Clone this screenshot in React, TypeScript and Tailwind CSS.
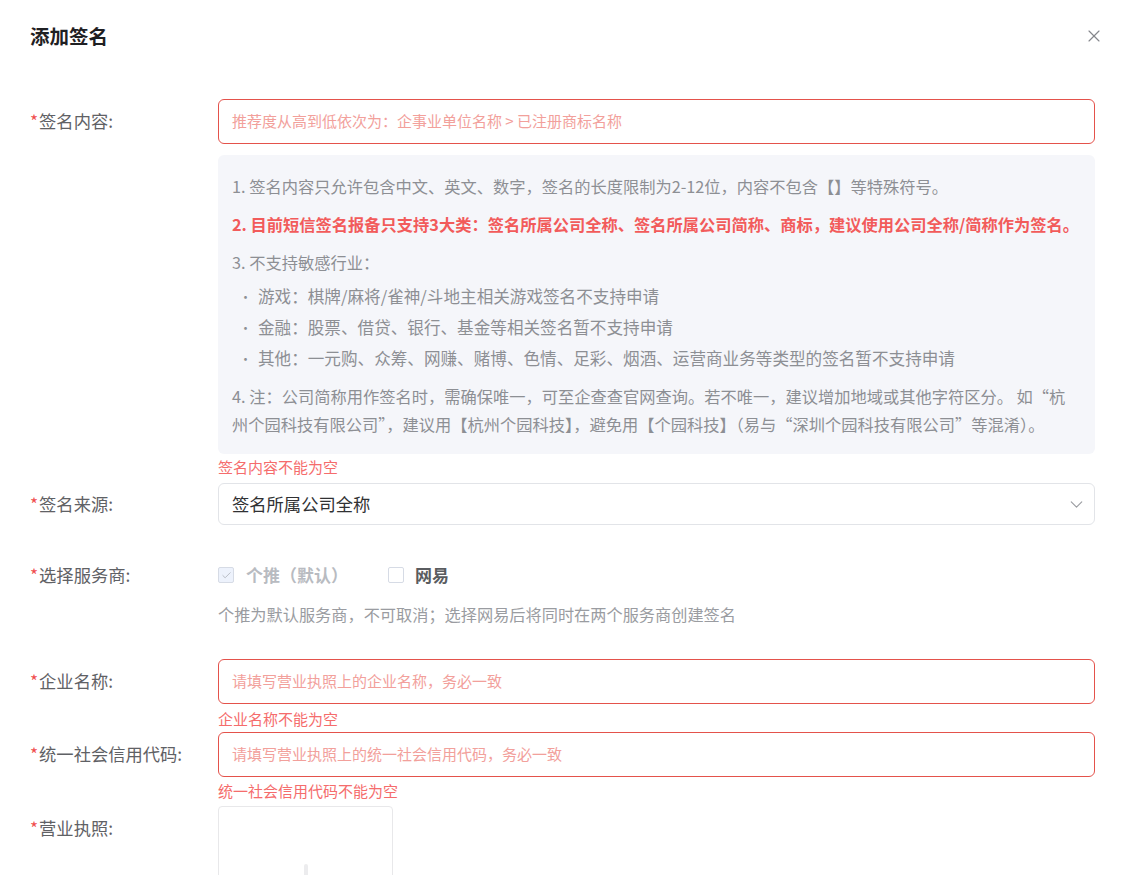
import { X, ChevronDown, Check } from "lucide-react"

const FONT = { fontFamily: '"Noto Sans CJK SC", "Noto Sans", sans-serif' }

function Label({ text }: { text: string }) {
  return (
    <div className="flex h-[44px] w-[188px] shrink-0 items-center text-[17.3px] text-[#5f6165]">
      <span className="mr-[1px] text-[#f04c4c]">*</span>
      {text}
    </div>
  )
}

function ErrorInput({ placeholder }: { placeholder: string }) {
  return (
    <div className="flex h-[45px] items-center rounded-[6px] border border-[#e4524b] px-[13px] text-[15px] text-[#f2a09b]">
      {placeholder}
    </div>
  )
}

const bullets = [
  "游戏：棋牌/麻将/雀神/斗地主相关游戏签名不支持申请",
  "金融：股票、借贷、银行、基金等相关签名暂不支持申请",
  "其他：一元购、众筹、网赚、赌博、色情、足彩、烟酒、运营商业务等类型的签名暂不支持申请",
]

export default function App() {
  return (
    <div className="h-[875px] w-full overflow-hidden bg-white" style={FONT}>
      <div className="flex h-[72px] items-center justify-between pl-[30px] pr-[18px]">
        <h1 className="text-[19.5px] font-semibold text-[#1f2023]">添加签名</h1>
        <X className="h-[20px] w-[20px] text-[#85878c]" strokeWidth={1.4} />
      </div>

      <div className="pl-[30px] pr-[27px] pt-[27px]">
        {/* 签名内容 */}
        <div className="flex">
          <Label text="签名内容:" />
          <div className="flex-1">
            <ErrorInput placeholder="推荐度从高到低依次为：企事业单位名称 > 已注册商标名称" />
            <div className="mt-[11px] rounded-[6px] bg-[#f5f6fa] pb-[16px] pl-[14px] pr-[8px] pt-[17px] text-[16.25px] text-[#8d8f94]">
              <p className="mb-[10px] leading-[28px]">1. 签名内容只允许包含中文、英文、数字，签名的长度限制为2-12位，内容不包含【】等特殊符号。</p>
              <p className="mb-[10px] font-bold leading-[28px] text-[#f25b5b]">2. 目前短信签名报备只支持3大类：签名所属公司全称、签名所属公司简称、商标，建议使用公司全称/简称作为签名。</p>
              <p className="mb-[5px] leading-[28px]">3. 不支持敏感行业：</p>
              <ul className="mb-[8px] pl-[7px] text-[16.6px]">
                {bullets.map((b) => (
                  <li key={b} className="flex leading-[31px]">
                    <span className="w-[19px] text-[13px]">•</span>
                    {b}
                  </li>
                ))}
              </ul>
              <p className="leading-[28px]">
                4. 注：公司简称用作签名时，需确保唯一，可至企查查官网查询。若不唯一，建议增加地域或其他字符区分。 如“杭
                <br />
                州个园科技有限公司”，建议用【杭州个园科技】，避免用【个园科技】（易与“深圳个园科技有限公司”等混淆）。
              </p>
            </div>
            <div className="h-[29px] text-[15px] leading-[26px] text-[#f56c6c]">签名内容不能为空</div>
          </div>
        </div>

        {/* 签名来源 */}
        <div className="mb-[28px] flex">
          <div className="flex h-[42px] w-[188px] shrink-0 items-center text-[17.3px] text-[#5f6165]">
            <span className="mr-[1px] text-[#f04c4c]">*</span>签名来源:
          </div>
          <div className="flex h-[42px] flex-1 items-center justify-between rounded-[6px] border border-[#e2e4e8] pl-[13px] pr-[7px] text-[17.3px] text-[#303133]">
            签名所属公司全称
            <ChevronDown className="h-[21px] w-[21px] text-[#9a9ca1]" strokeWidth={1.3} />
          </div>
        </div>

        {/* 选择服务商 */}
        <div className="mb-[28px] flex">
          <Label text="选择服务商:" />
          <div className="flex-1">
            <div className="flex h-[44px] items-center">
              <div className="mr-[40px] flex items-center">
                <span className="mr-[12px] flex h-[16px] w-[16px] items-center justify-center rounded-[2px] border border-[#d6dbe5] bg-[#edf2fc]">
                  <Check className="h-[11px] w-[11px] text-[#b4b8c0]" strokeWidth={2} />
                </span>
                <span className="text-[17px] font-bold text-[#b8bbc1]">个推（默认）</span>
              </div>
              <div className="flex items-center">
                <span className="mr-[11px] h-[16px] w-[16px] rounded-[2px] border border-[#d6dbe5] bg-white" />
                <span className="text-[17px] font-bold text-[#5a5c60]">网易</span>
              </div>
            </div>
            <div className="text-[16.2px] leading-[34px] text-[#9a9ca1]">个推为默认服务商，不可取消；选择网易后将同时在两个服务商创建签名</div>
          </div>
        </div>

        {/* 企业名称 */}
        <div className="flex">
          <Label text="企业名称:" />
          <div className="flex-1">
            <ErrorInput placeholder="请填写营业执照上的企业名称，务必一致" />
            <div className="h-[28px] text-[15px] leading-[29px] text-[#f56c6c]">企业名称不能为空</div>
          </div>
        </div>

        {/* 统一社会信用代码 */}
        <div className="flex">
          <Label text="统一社会信用代码:" />
          <div className="flex-1">
            <ErrorInput placeholder="请填写营业执照上的统一社会信用代码，务必一致" />
            <div className="h-[29px] text-[15px] leading-[28px] text-[#f56c6c]">统一社会信用代码不能为空</div>
          </div>
        </div>

        {/* 营业执照 */}
        <div className="flex">
          <Label text="营业执照:" />
          <div className="flex h-[175px] w-[175px] items-center justify-center rounded-[4px] border border-[#e8e8ea]">
            <div className="flex h-[60px] w-[60px] items-center justify-center">
              <div className="flex h-[60px] w-[4px] rounded-full bg-[#ececee]" />
            </div>
          </div>
        </div>
      </div>
    </div>
  )
}
